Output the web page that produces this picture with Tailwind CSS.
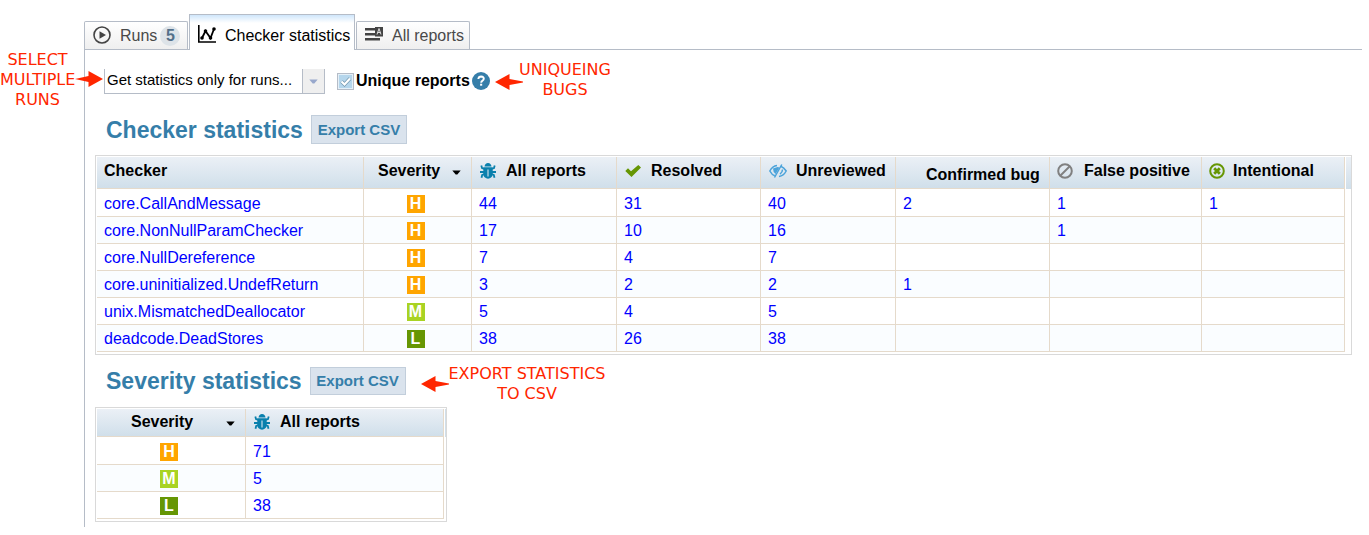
<!DOCTYPE html>
<html lang="en">
<head>
<meta charset="utf-8">
<title>Checker statistics</title>
<script src="https://cdn.jsdelivr.net/npm/@tailwindcss/browser@4"></script>
</head>
<body class="bg-white text-black text-[16px] leading-[18px] font-['Liberation_Sans',sans-serif]">
<svg class="hidden" aria-hidden="true">
  <symbol id="bug" viewBox="0 0 16 16">
    <path d="M4.500 3.500Q5 0 8 0t3.500 3.500z" fill="#0a80ad"/>
    <path d="M3.300 4.300h9.400V12q-1 3.300-4.700 3.700Q4.300 15.300 3.300 12z" fill="#0a80ad"/>
    <path d="M1.300 2.600 2 5l2.500 1M0 9h4M1.500 14.800 2.200 12l2.300-1M14.700 2.600 14 5l-2.500 1M16 9h-4M14.500 14.800 13.800 12l-2.300-1" fill="none" stroke="#0a80ad" stroke-width="1.800"/>
    <path d="M7.300 6.500h1.400v7H7.300z" fill="#a9cfe0"/>
  </symbol>
  <symbol id="caret" viewBox="0 0 10 6"><path d="M0 .5h10L6 5.500H4z" fill="currentColor"/></symbol>
</svg>
<div class="relative pt-[14px] pl-[84px] pr-[7px]">
  <div class="relative z-10 flex items-end gap-px h-[36px]" role="tablist">
    <button role="tab" class="flex items-center w-[104px] h-[28px] mb-px pl-[8px] rounded-t-[2px] border border-b-0 border-[#b5bcc7] bg-linear-to-b from-white to-[#efefef] text-[#494949]">
      <svg class="size-[18px] mb-[2px] shrink-0" viewBox="0 0 18 18"><circle cx="9" cy="9" r="8" fill="none" stroke="#444" stroke-width="1.600"/><path d="M6.500 5.300 13 9l-6.500 3.700z" fill="#444"/></svg>
      <span class="ml-[9px]">Runs</span>
      <span class="ml-[3px] flex items-center justify-center size-[20px] rounded-full bg-[#dde3e8] text-[#54708a] font-bold">5</span>
    </button>
    <button role="tab" aria-selected="true" class="flex items-center w-[166px] h-[36px] pt-[6px] pl-[8px] border border-b-0 border-[#b5bcc7] bg-linear-to-b from-[#cfe6fb] to-white to-[8px]">
      <svg class="size-[18px] mb-[3px] shrink-0" viewBox="0 0 18 18"><path d="M.8 0v17H18" fill="none" stroke="#000" stroke-width="1.600"/><path d="M4 13 7.500 6l5 7L16 4" fill="none" stroke="#000" stroke-width="1.800"/><circle cx="4" cy="13" r="1.800"/><circle cx="7.500" cy="6" r="1.800"/><circle cx="12.500" cy="13" r="1.800"/><circle cx="16" cy="4" r="1.800"/></svg>
      <span class="ml-[9px]">Checker statistics</span>
    </button>
    <button role="tab" class="flex items-center w-[114px] h-[28px] mb-px pl-[8px] rounded-t-[2px] border border-b-0 border-[#b5bcc7] bg-linear-to-b from-white to-[#efefef] text-[#494949]">
      <svg class="w-[18px] h-[14px] mb-[3px] shrink-0" viewBox="0 0 18 14"><path d="M0 1h10v2.500H0zM0 6h10v2.500H0zM0 11h15v2.500H0zM10 0h8v9.500h-8z" fill="#444"/><path d="m12 7.500 2-6 2 6M12.500 5.500h3" fill="none" stroke="#ddd"/></svg>
      <span class="ml-[9px]">All reports</span>
    </button>
  </div>

  <main class="-mt-px border-l border-t border-[#b5bcc7] pl-[10px] pr-[10px] pt-[19px] pb-[5px]">
    <div class="flex items-center h-[25px] pl-[9px]">
      <div class="relative w-[221px] h-[25px]">
        <select aria-label="Runs" class="appearance-none block w-full h-full pl-[2px] pb-[2px] border border-t-0 border-[#b5bcc7] bg-white text-[15px] outline-none">
          <option>Get statistics only for runs...</option>
        </select>
        <span class="pointer-events-none absolute right-px top-0 bottom-px w-[22px] border-l border-[#b5bcc7] bg-[#efefef] flex items-center justify-center text-[#98a8cc]"><svg class="w-[9px] h-[5px]"><use href="#caret"/></svg></span>
      </div>
      <label class="flex items-center ml-[12px] pb-px font-bold">
        <span class="relative size-[17px]">
          <input type="checkbox" checked class="appearance-none block size-full border border-[#b5bcc7] bg-[#b5d6ec] shadow-[inset_0_0_0_1px_#e4f0f8]">
          <svg class="pointer-events-none absolute inset-0" viewBox="0 0 17 17"><path d="m4.500 8.500 3 3L13 5.500" fill="none" stroke="#7397ae" stroke-width="3.600"/><path d="m4.500 8.500 3 3L13 5.500" fill="none" stroke="#fff" stroke-width="2.200"/></svg>
        </span>
        <span class="ml-[2px]">Unique reports</span>
      </label>
      <button aria-label="Help" class="ml-[2px] mb-[2px] size-[18px]"><svg viewBox="0 0 18 18"><circle cx="9" cy="9" r="9" fill="#367ea9"/><path d="M6.300 7q.3-2.500 2.800-2.500 2.700.1 2.700 2.300 0 1.200-1.500 2-1.100.6-1.100 1.900" fill="none" stroke="#fff" stroke-width="1.900"/><path d="M8.100 11.700h2.100v2H8.100z" fill="#fff"/></svg></button>
    </div>

    <div class="flex items-center gap-[8px] h-[29px] mt-[21px] pl-[11px]">
      <h2 class="text-[23px] leading-[28px] font-bold text-[#357ea9]">Checker statistics</h2>
      <button class="w-[96px] h-[29px] border border-[#c2cedb] bg-[#dae3ed] text-[15px] font-bold text-[#357ea9]">Export CSV</button>
    </div>

    <div class="mt-[11px] border border-[#d9d9d9] pl-px pt-px pb-[2px]">
      <table class="w-full table-fixed border-separate border-spacing-0">
        <colgroup><col class="w-[267px]"><col class="w-[108px]"><col class="w-[145px]"><col class="w-[144px]"><col class="w-[135px]"><col class="w-[154px]"><col class="w-[152px]"><col><col class="w-[6px]"></colgroup>
        <thead class="[&_th]:h-[32px] [&_th]:p-0 [&_th]:pl-[7px] [&_th]:pb-[4px] [&_th]:text-left [&_th]:border-r [&_th]:border-b [&_th]:border-[#e5dacb] [&_th]:bg-linear-to-b [&_th]:from-[#ebf0f6] [&_th]:to-[#d0dfea]">
          <tr>
            <th>Checker</th>
            <th><div class="flex items-center pl-[7px]">Severity<svg class="ml-auto mr-[10px] mt-[3px] w-[9px] h-[5px]"><use href="#caret"/></svg></div></th>
            <th><div class="flex items-center gap-[10px] pl-px"><svg class="size-[16px]"><use href="#bug"/></svg>All reports</div></th>
            <th><div class="flex items-center gap-[10px] pl-px"><svg class="size-[16px]" viewBox="0 0 16 16"><path d="M.3 8 3 5.200l3 3L13.300 2 16 4.500 6.500 14z" fill="#669603"/></svg>Resolved</div></th>
            <th><div class="flex items-center gap-[9px] pl-px"><svg class="w-[18px] h-[14px]" viewBox="0 0 18 14" fill="none" stroke="#4ba3da" stroke-width="1.500"><path d="M8 1.500Q3.500 2 .8 7q2 3.700 5 4.800M11.800 2.200Q15 3.500 17.200 7 14.500 12 10 12.500"/><path d="M4 4.500 8.500 3 10.500 3.500 6.500 10Q4 8 4 4.500z" fill="#4ba3da" stroke="none"/><path d="M12.800.5 5.500 13.500M13.500 5.500q0 3-2.500 4.500"/></svg>Unreviewed</div></th>
            <th><div class="pl-[23px] pt-[9px]">Confirmed bug</div></th>
            <th><div class="flex items-center gap-[11px]"><svg class="size-[16px]" viewBox="0 0 16 16" fill="none" stroke="#808080" stroke-width="2"><circle cx="8" cy="8" r="6.800"/><path d="m3.500 12.500 9-9"/></svg>False positive</div></th>
            <th><div class="flex items-center gap-[8px]"><svg class="size-[16px]" viewBox="0 0 16 16" fill="none" stroke="#669603"><circle cx="8" cy="8" r="6.800" stroke-width="2"/><path d="m5.200 5.200 5.600 5.600m0-5.600-5.600 5.600" stroke-width="2.800"/></svg>Intentional</div></th>
            <td class="border-l border-white bg-linear-to-b from-[#ebf0f6] to-[#d0dfea]"></td>
          </tr>
        </thead>
        <tbody id="checkers"></tbody>
      </table>
    </div>

    <div class="flex items-center gap-[8px] h-[28px] mt-[12px] pl-[11px]">
      <h2 class="text-[23px] leading-[28px] font-bold text-[#357ea9]">Severity statistics</h2>
      <button class="w-[96px] h-[28px] border border-[#c2cedb] bg-[#dae3ed] text-[15px] font-bold text-[#357ea9]">Export CSV</button>
    </div>

    <div class="mt-[12px] w-[352px] border border-[#d9d9d9] pl-px pt-px pb-[2px]">
      <table class="w-full table-fixed border-separate border-spacing-0">
        <colgroup><col class="w-[149px]"><col><col class="w-[2px]"></colgroup>
        <thead class="[&_th]:h-[28px] [&_th]:p-0 [&_th]:pl-[7px] [&_th]:pb-[2px] [&_th]:text-left [&_th]:border-r [&_th]:border-b [&_th]:border-[#e5dacb] [&_th]:bg-linear-to-b [&_th]:from-[#ebf0f6] [&_th]:to-[#d0dfea]">
          <tr>
            <th><div class="flex items-center pl-[27px]">Severity<svg class="ml-auto mr-[10px] mt-[3px] w-[9px] h-[5px]"><use href="#caret"/></svg></div></th>
            <th><div class="flex items-center gap-[10px] pl-px"><svg class="size-[16px]"><use href="#bug"/></svg>All reports</div></th>
            <td class="p-0 border-l border-white bg-[#d0dfea]"></td>
          </tr>
        </thead>
        <tbody id="severities"></tbody>
      </table>
    </div>
  </main>

  <div class="absolute left-0 top-[50px] w-[75px] text-center text-[16px] leading-[20px] text-[#ff2600] font-['DejaVu_Sans',sans-serif]">SELECT MULTIPLE RUNS</div>
  <svg class="absolute left-[75px] top-[71px] w-[28px] h-[16px]" viewBox="0 0 28 16"><path d="M0 8 13.500 5V0L28 8 13.500 16v-5z" fill="#ff2600"/></svg>
  <div class="absolute left-[515px] top-[60px] w-[100px] text-center text-[16px] leading-[20px] text-[#ff2600] font-['DejaVu_Sans',sans-serif]">UNIQUEING BUGS</div>
  <svg class="absolute left-[495px] top-[74px] w-[28px] h-[16px]" viewBox="0 0 28 16"><path d="M0 8 14.500 0v5L28 7.500v1L14.500 11v5z" fill="#ff2600"/></svg>
  <div class="absolute left-[442px] top-[364px] w-[170px] text-center text-[16px] leading-[20px] text-[#ff2600] font-['DejaVu_Sans',sans-serif]">EXPORT STATISTICS TO CSV</div>
  <svg class="absolute left-[421px] top-[376px] w-[28px] h-[16px]" viewBox="0 0 28 16"><path d="M0 8 14.500 0v5L28 7.500v1L14.500 11v5z" fill="#ff2600"/></svg>
</div>
<script>
const colors = { H: 'bg-[#ffa500]', M: 'bg-[#a9d323]', L: 'bg-[#669603]' };
const link = v => v === '' ? '' : `<a href="#" class="text-[#0000ff]">${v}</a>`;
const badge = s => `<span class="flex items-center justify-center mx-auto w-[18px] h-[18px] font-bold text-white ${colors[s]}">${s}</span>`;
const row = (cells, i) => {
  const height = i ? 'h-[27px]' : 'h-[28px]';
  return `<tr class="${i % 2 ? 'bg-[#fafdff]' : 'bg-white'}">` + cells.map(c => colors[c]
    ? `<td class="${height} p-0 pt-[2px] pr-[4px] border-r border-b border-[#e5dacb]">${badge(c)}</td>`
    : `<td class="${height} p-0 pt-[2px] pl-[7px] border-r border-b border-[#e5dacb]">${link(c)}</td>`).join('') + '<td class="p-0 bg-white"></td></tr>';
};
document.getElementById('checkers').innerHTML = [
  ['core.CallAndMessage', 'H', 44, 31, 40, 2, 1, 1],
  ['core.NonNullParamChecker', 'H', 17, 10, 16, '', 1, ''],
  ['core.NullDereference', 'H', 7, 4, 7, '', '', ''],
  ['core.uninitialized.UndefReturn', 'H', 3, 2, 2, 1, '', ''],
  ['unix.MismatchedDeallocator', 'M', 5, 4, 5, '', '', ''],
  ['deadcode.DeadStores', 'L', 38, 26, 38, '', '', ''],
].map(row).join('');
document.getElementById('severities').innerHTML = [['H', 71], ['M', 5], ['L', 38]].map(row).join('');
</script>
</body>
</html>
